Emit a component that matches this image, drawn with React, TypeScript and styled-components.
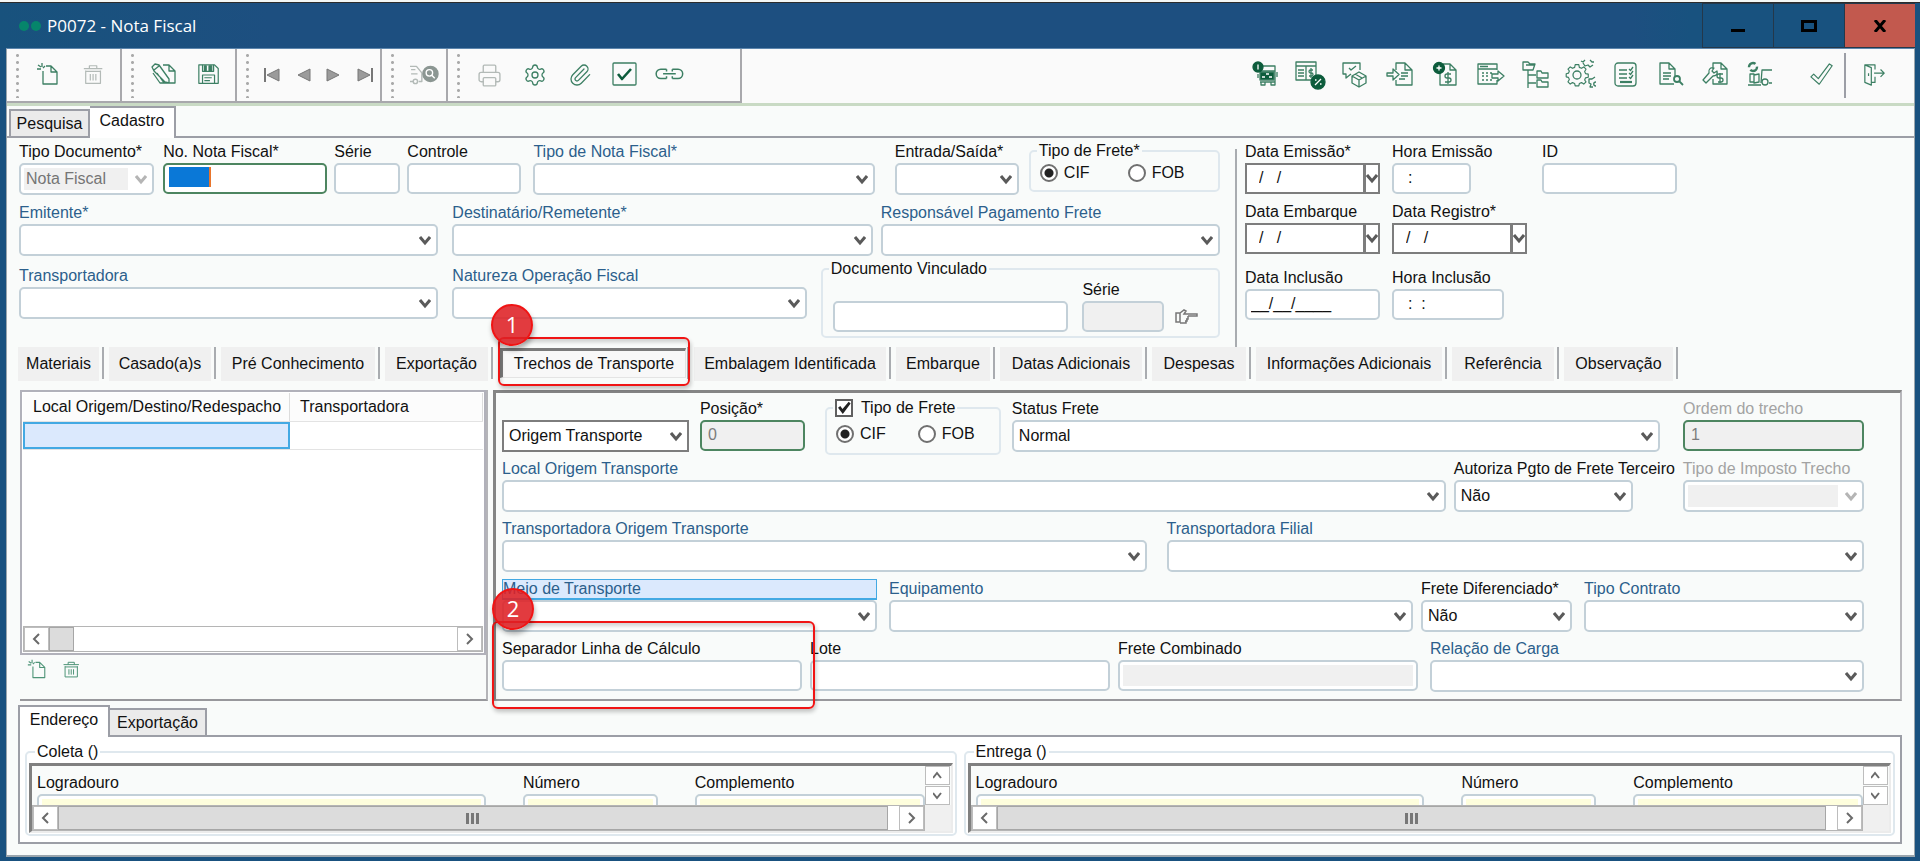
import React, { useId, useState } from 'react';
import styled, { createGlobalStyle, css } from 'styled-components';
import { Paperclip, Printer, Settings } from 'lucide-react';

const GlobalStyle = createGlobalStyle`
  * { box-sizing: border-box; }
  body { margin: 0; background: #19517f; }
  body, button, input, select {
    font-family: 'Liberation Sans', Arial, sans-serif;
    font-size: 16px;
    color: #111;
  }
  button { border: 0; padding: 0; background: none; }
  fieldset { margin: 0; padding: 0; border: 0; min-width: 0; }
`;

const c = {
  frame: '#19517f',
  face: '#f9fbfa',
  line: '#9c9ea6',
  field: '#c3d0d8',
  green: '#3c7f63',
  darkGreen: '#0d5c3c',
  link: '#2c5f8c',
};

/* ---------- window ---------- */

const Shell = styled.div`
  min-height: 100vh;
  display: flex;
  flex-direction: column;
  background: ${c.frame};
`;

const TopStrip = styled.div`
  height: 3px;
  background: #f4f7f5;
  border-bottom: 1px solid #2c2c2c;
`;

const TitleBar = styled.header`
  height: 45px;
  display: flex;
  align-items: center;
  padding: 0 5px 0 18px;
  background: linear-gradient(90deg, #18527d 0, #1d4f80 14%, #1d4f80 85%, #18527f 88%);
`;

const Dots = styled.svg`
  width: 24px;
  height: 12px;
  margin-right: 5px;
  fill: #06856b;
`;

const Title = styled.h1`
  margin: 0;
  flex: 1;
  font: 400 17px/24px 'Open Sans', 'Noto Sans', sans-serif;
  color: #fff;
`;

const WindowButton = styled.button<{ $close?: boolean }>`
  width: 71px;
  height: 45px;
  border: 1px solid #24384a;
  border-right-width: 0;
  background: ${p => (p.$close ? '#c2594e' : '#18527f')};
  display: grid;
  place-items: center;
`;

const Client = styled.main`
  flex: 1;
  margin: 0 5px 4px 6px;
  background: ${c.face};
  border: 1px solid #9aa5ad;
  border-top-color: #5d86ad;
  border-bottom-width: 2px;
`;

/* ---------- toolbar ---------- */

const Toolbar = styled.div`
  height: 57px;
  display: flex;
  border-bottom: 3px solid #c9dac4;
  background: #fafafa;
`;

const ToolGroup = styled.div<{ $tail?: number }>`
  display: flex;
  align-items: center;
  padding: 0 ${p => p.$tail ?? 0}px 0 9px;
  border-right: 2px solid #a8a8ac;
  border-bottom: 2px solid #a8a8ac;
`;

const Grip = styled.i`
  width: 3px;
  height: 46px;
  margin-right: 7px;
  background: radial-gradient(circle, #aaa 1px, transparent 2px) 0 0 / 3px 7px;
`;

const ToolButton = styled.button<{ $narrow?: boolean; $off?: boolean }>`
  width: ${p => (p.$narrow ? 31 : 45)}px;
  height: 45px;
  display: grid;
  place-items: center;
  color: ${p => (p.$off ? '#b3bab7' : c.green)};
`;

const Actions = styled.div`
  margin-left: auto;
  display: flex;
  align-items: center;
  padding: 0 17px 2px 0;
`;

const ActionEnd = styled.div<{ $line?: boolean }>`
  margin-left: ${p => (p.$line ? 16 : 6)}px;
  border-right: ${p => (p.$line ? `2px solid ${c.line}` : '0')};
`;

const Svg = styled.svg<{ $size?: number }>`
  width: ${p => p.$size ?? 26}px;
  height: ${p => p.$size ?? 26}px;
  fill: none;
  stroke: currentColor;
  stroke-width: 1.3;
  stroke-linejoin: round;
  overflow: visible;
`;

const G = c.darkGreen;

const icons: Record<string, React.ReactNode> = {
  new: (
    <path d="M7 9v13h14V10l-6-6h-5M15 4v6h6M1 7h4M6 1v4M2 3l3 2M9 4l-2 2" />
  ),
  trash: (
    <path d="M2 6h20M8 6V3h8v3M4 8v14h16V8M4 9h16M9 12v7M12 12v7M15 12v7" />
  ),
  edit: (
    <path d="M12 3h6l6 6v12H12M18 3v6h6M1 5l3-3 4 1 10 14v4l-4-1L3 9zM3 8l5-4M6 11l7 10H9L2 11" />
  ),
  save: (
    <>
      <path d="M2 2h17l4 4v16H2zM6 22v-9h13v9M8 16h8M8 19h6" />
      <path d="M6 2v7h12V2" />
      <path d="M13 3h3v5h-3zM8 3h2v5H8z" fill="currentColor" />
    </>
  ),
  truckSearch: (
    <>
      <path d="M0 5h6l5 6v8H8M1 8h4M1 12h6M0 19h3" />
      <circle cx="5" cy="19" r="2" />
      <circle cx="19" cy="12" r="7" fill="#8b9692" stroke="#8b9692" />
      <circle cx="18" cy="11" r="3" stroke="#fff" />
      <path d="M20 13l3 3" stroke="#fff" />
    </>
  ),
  checkBox: (
    <>
      <rect x="1" y="1" width="23" height="22" rx="1" />
      <path d="M6 12l4 5 9-10" stroke={G} strokeWidth="2.6" />
    </>
  ),
  link: (
    <path d="M10 8H5a4 4 0 000 8h5M15 8h5a4 4 0 010 8h-5M7 12h11M10 8v2M15 8v2M10 14v2M15 14v2" />
  ),
  truckInfo: (
    <>
      <path d="M7 4h15v16H7M7 9h15M8 20v3h4v-3M18 20v3h4v-3M5 12v4M24 10v5" />
      <rect x="7" y="10" width="14" height="8" fill={G} />
      <path d="M9 15h3M16 15h3M13 12h3" stroke="#fff" />
      <circle cx="5" cy="5" r="5" fill={G} stroke={G} />
      <path d="M5 2.5v5" stroke="#fff" />
    </>
  ),
  tablePercent: (
    <>
      <path d="M-2 0h20v18H-2zM-2 4h20M8 4v14M0 8h6M0 11h6M0 14h6" />
      <path d="M15 8h-2.500a1.500 1.500 0 000 3h1a1.500 1.500 0 010 3H11M13 6v10" />
      <circle cx="20" cy="20" r="7" fill={G} stroke={G} />
      <path d="M17 23l6-6M17 18h1.500M22 22h1.500" stroke="#fff" />
    </>
  ),
  box: (
    <path d="M8 12l-5 4v-4H0V1h17v7M6 6l2 2 5-4M9 14l7-4 7 4v7l-7 4-7-4zM9 14l7 4 7-4M16 18v7M12 12l7 4" />
  ),
  docIn: (
    <path d="M8 8V1h9l7 7v15H8v-5M17 1v7h7M-1 11h6V7l6 5.500L5 18v-4h-6zM13 11h7M13 14h7M11 17h6" />
  ),
  docAdd: (
    <>
      <path d="M10 2h7l6 6v15H7V10M17 2v6h6" />
      <path d="M18 12h-4a2 2 0 000 4h2a2 2 0 010 4h-4M15 10v12" />
      <circle cx="6" cy="6" r="5.500" fill={G} stroke={G} />
      <path d="M6 3.500v5M3.500 6h5" stroke="#fff" />
    </>
  ),
  calOut: (
    <path d="M19 8V2H0v20h19v-4M0 7h19M2 4.500h8M4 11h2M8 11h2M12 11h2M4 14h2M8 14h2M4 18h2M8 18h2M12 18h2M14 12h6V9l6 5-6 5v-3h-6z" />
  ),
  tree: (
    <path d="M0 0h5l2 2h5l-2 6H0zM3 3h9M5 8v18M5 13h8M5 21h8M14 9h4l1 2h6v5H14zM14 18h4l1 2h6v5H14z" />
  ),
  gears: (
    <>
      <path d="M8 3h4l.6 3 2.400 1 2.500-1.500L20 8l-1.500 2.500 1 2.400 3 .6v3.500l-3 .6-1 2.400L20 22l-2.500 2.500-2.500-1.600-2.400 1-.6 2.600H8l-.6-2.600-2.400-1-2.500 1.600L0 22l1.500-2.500-1-2.400L-2 16.500V13l2.500-.6 1-2.400L0 8l2.500-2.500L5 7l2.400-1z" transform="scale(.9)" />
      <circle cx="9" cy="13" r="4" />
      <path d="M13-1l2 1 2-2M22-2l2 2h2M15 1l2 3 3-1 2 2 3-2M27 15l-3 2-3 0v4l2 1-1 3 3 0M28 20c-3 0-3 4 0 4" />
    </>
  ),
  checklist: (
    <>
      <rect x="2" y="1" width="21" height="23" rx="3" />
      <path d="M6 8h8M6 12h8M6 16h8M16 7l1.500 1.500L20 5M16 11l1.500 1.500L20 9M16 15l1.500 1.500L20 13" />
      <path d="M7 20h12" strokeWidth="2.200" />
    </>
  ),
  docSearch: (
    <>
      <path d="M16 22H2V1h9l6 6v7M11 1v6h6M5 11h8M5 14h8M5 17h6" />
      <circle cx="19" cy="17" r="3" strokeWidth="1.800" />
      <path d="M21 19l4 4" strokeWidth="1.800" />
    </>
  ),
  docWrench: (
    <path d="M10 7V1h8l6 6v15H10v-5M18 1v6h6M20 12h-4a2 2 0 000 4h2a2 2 0 010 4h-3M17 11v10M0 18l6-7c-1-4 2-6 5-5L9 9l2 2 3-2c1 3-1 5-4 5l-7 7z" />
  ),
  forklift: (
    <>
      <circle cx="5" cy="5" r="4" strokeWidth="2.400" strokeDasharray="9 3" />
      <path d="M24 8H14l-1 13M2 12h4v8H2zM6 13l5-1v8l-5 1zM0 23h13M21 21h3" />
      <circle cx="17" cy="20" r="3" />
    </>
  ),
  confirm: <path d="M1 15l3-3 5 5L21 1l3 2L10 23z" />,
  exit: <path d="M2 2h11v5M2 2l7 3v19l-7-3zM9 21h4v-6M6 11v3M12 11h11M19 7l4 4-4 4" />,
};

const Icon = ({ name, size }: { name: string; size?: number }) => (
  <Svg viewBox="0 0 26 26" $size={size} aria-hidden>
    {icons[name]}
  </Svg>
);

const Arrow = ({ back, end }: { back?: boolean; end?: boolean }) => (
  <svg width="18" height="16" viewBox="0 0 18 16" aria-hidden>
    <g transform={back ? 'matrix(-1 0 0 1 18 0)' : undefined}>
      <path d="M2 2l12 6-12 6z" fill="#9b9b9b" stroke="#777" />
      {end && <path d="M16 1v14" stroke="#777" strokeWidth="2" />}
    </g>
  </svg>
);

/* ---------- page tabs ---------- */

const TabStrip = styled.div<{ $indent?: number }>`
  height: 32px;
  display: flex;
  align-items: flex-end;
  padding-left: ${p => p.$indent ?? 0}px;
  border-bottom: 2px solid ${c.line};
`;

const PageTab = styled.button<{ $on?: boolean; $w: number }>`
  width: ${p => p.$w}px;
  height: ${p => (p.$on ? 32 : 27)}px;
  border: 2px solid ${c.line};
  border-bottom: 0;
  background: ${p => (p.$on ? '#fff' : '#ebebeb')};
  ${p =>
    p.$on
      ? css`
          margin-bottom: -2px;
          padding-bottom: 5px;
        `
      : css`
          & + & { border-left: 0; }
        `}
`;

/* ---------- form parts ---------- */

const HeaderForm = styled.section`
  display: flex;
  min-height: 209px;
`;

const LeftForm = styled.div`
  flex: 1;
  min-width: 0;
  padding: 4px 15px 0 12px;
`;

const RightForm = styled.div`
  width: 35.5%;
  padding: 4px 0 0 8px;
`;

const Divider = styled.div`
  width: 2px;
  margin-top: 11px;
  background: #a9acb0;
`;

const Row = styled.div<{ $top?: number; $min?: number }>`
  display: flex;
  align-items: flex-start;
  margin-top: ${p => p.$top ?? 0}px;
  min-height: ${p => p.$min ?? 0}px;
`;

const Cell = styled.div<{ $w: number; $gap?: number; $fixed?: boolean; $drop?: number }>`
  position: relative;
  flex: ${p => (p.$fixed ? `0 1 ${p.$w}px` : `${p.$w} ${p.$w} ${p.$w}px`)};
  min-width: 0;
  margin-left: ${p => p.$gap ?? 0}px;
  padding-top: ${p => p.$drop ?? 0}px;
`;

type Tone = 'plain' | 'link' | 'off' | 'marked';

const Label = styled.label<{ $tone?: Tone }>`
  display: block;
  height: 21px;
  line-height: 20px;
  white-space: nowrap;
  color: ${p => (p.$tone === 'off' ? '#a3a3a3' : p.$tone === 'link' || p.$tone === 'marked' ? c.link : '#111')};
  ${p =>
    p.$tone === 'marked' &&
    css`
      line-height: 18px;
      background: #dbe9fd;
      border: 1px solid #43a9e3;
      box-shadow: inset 0 -1px #43a9e3;
    `}
`;

type Look = 'soft' | 'green' | 'square';

const boxLook = css<{ $look?: Look }>`
  width: 100%;
  margin: 0;
  display: block;
  background: #fff;
  border: 2px solid ${p => (p.$look === 'green' ? '#4d8560' : p.$look === 'square' ? '#7d7d7d' : c.field)};
  border-radius: ${p => (p.$look === 'square' ? 0 : 5)}px;
  outline: 0;
`;

const TextBox = styled.input<{ $look?: Look; $indent?: number; $tint?: string; $inner?: boolean }>`
  ${boxLook}
  height: 31px;
  padding: 0 2px 2px ${p => p.$indent ?? 6}px;
  background: ${p => p.$tint ?? '#fff'};
  ${p => p.$inner && 'box-shadow: inset 0 0 0 3px #fff;'}
  &:disabled { color: #7c7c7c; }
`;

const SelectWrap = styled.div`
  position: relative;
`;

const SelectBox = styled.select<{ $look?: Look }>`
  ${boxLook}
  height: 32px;
  appearance: none;
  padding: 0 24px 2px 5px;
  &:disabled {
    color: #757575;
    opacity: 1;
    background: #f0f0f0;
    box-shadow: inset -24px 0 #fff, inset 0 0 0 3px #fff;
  }
`;

const Chevron = styled.svg<{ $off?: boolean }>`
  position: absolute;
  right: 7px;
  top: 11px;
  width: 12px;
  height: 11px;
  fill: none;
  stroke: ${p => (p.$off ? '#b5b5b5' : '#5a5a5a')};
  stroke-width: 3;
  pointer-events: none;
`;

const ChevronPath = () => <path d="M1 2l5 6 5-6" />;

interface FieldProps {
  label?: string;
  name?: string;
  w: number;
  gap?: number;
  drop?: number;
  fixed?: boolean;
  tone?: Tone;
  look?: Look;
  value?: string;
  disabled?: boolean;
  indent?: number;
  tint?: string;
  inner?: boolean;
  children?: React.ReactNode;
}

const TextField = (p: FieldProps) => {
  const id = useId();
  return (
    <Cell $w={p.w} $gap={p.gap} $fixed={p.fixed} $drop={p.drop}>
      <Label htmlFor={id} $tone={p.tone}>{p.label}</Label>
      <TextBox
        id={id}
        aria-label={p.name}
        defaultValue={p.value}
        disabled={p.disabled}
        $look={p.look}
        $indent={p.indent}
        $tint={p.tint}
        $inner={p.inner}
      />
      {p.children}
    </Cell>
  );
};

const SelectField = (p: FieldProps) => {
  const id = useId();
  return (
    <Cell $w={p.w} $gap={p.gap} $fixed={p.fixed} $drop={p.drop}>
      <Label htmlFor={id} $tone={p.tone}>{p.label}</Label>
      <SelectWrap>
        <SelectBox id={id} aria-label={p.name} $look={p.look} disabled={p.disabled}>
          <option>{p.value ?? ''}</option>
        </SelectBox>
        <Chevron viewBox="0 0 12 11" $off={p.disabled}><ChevronPath /></Chevron>
      </SelectWrap>
    </Cell>
  );
};

const DateBox = styled.div`
  display: flex;
  height: 31px;
  border: 2px solid #7d7d7d;
  background: #fff;
`;

const DateInput = styled.input`
  flex: 1;
  min-width: 0;
  border: 0;
  outline: 0;
  padding: 0 0 2px 12px;
  white-space: pre;
`;

const DateButton = styled.button`
  width: 15px;
  border-left: 3px solid #7d7d7d;
  display: grid;
  place-items: center;
  svg { fill: none; stroke: #5a5a5a; stroke-width: 3; }
`;

const DateField = ({ label, gap }: { label: string; gap?: number }) => {
  const id = useId();
  return (
    <Cell $w={135} $gap={gap} $fixed>
      <Label htmlFor={id}>{label}</Label>
      <DateBox>
        <DateInput id={id} defaultValue="/   /" />
        <DateButton type="button" aria-label={`Abrir calendário: ${label}`}>
          <svg width="12" height="11" viewBox="0 0 12 11"><ChevronPath /></svg>
        </DateButton>
      </DateBox>
    </Cell>
  );
};

const Group = styled.fieldset<{ $w: number; $gap: number; $h: number }>`
  flex: ${p => `${p.$w} ${p.$w} ${p.$w}px`};
  margin-left: ${p => p.$gap}px;
  height: ${p => p.$h}px;
  border: 2px solid #dfe8ee;
  border-radius: 5px;
`;

const Legend = styled.legend`
  margin-left: 6px;
  padding: 0 2px;
  line-height: 18px;
`;

const Radios = styled.div<{ $gap: number; $drop: number }>`
  display: flex;
  gap: ${p => p.$gap}px;
  padding: ${p => p.$drop}px 0 0 9px;
`;

const RadioLabel = styled.label`
  display: flex;
  align-items: center;
  gap: 6px;
  line-height: 22px;
`;

const Radio = styled.input`
  appearance: none;
  width: 18px;
  height: 18px;
  margin: 0;
  border: 2px solid #707070;
  border-radius: 50%;
  background: #fff;
  &:checked {
    background: radial-gradient(circle, #222 4px, #fff 5px);
  }
`;

const RadioPair = ({ name, gap, drop }: { name: string; gap: number; drop: number }) => (
  <Radios $gap={gap} $drop={drop}>
    <RadioLabel><Radio type="radio" name={name} defaultChecked />CIF</RadioLabel>
    <RadioLabel><Radio type="radio" name={name} />FOB</RadioLabel>
  </Radios>
);

const Check = styled.input`
  appearance: none;
  width: 18px;
  height: 18px;
  margin: 0;
  border: 2px solid #606060;
  background: #fff;
  &:checked::before {
    content: '';
    display: block;
    width: 14px;
    height: 14px;
    background: #222;
    clip-path: polygon(8% 48%, 24% 36%, 40% 58%, 84% 6%, 98% 18%, 42% 92%);
  }
`;

const CheckLabel = styled.label`
  display: flex;
  align-items: center;
  gap: 8px;
`;

const Selection = styled.span`
  position: absolute;
  left: 6px;
  top: 25px;
  width: 42px;
  height: 20px;
  background: #0a78d7;
  border-right: 2px solid #e8752c;
`;

const LinkedDoc = styled.div`
  display: flex;
  align-items: flex-end;
  padding: 2px 18px 0 10px;
`;

const HandButton = styled.button`
  width: 26px;
  height: 26px;
  margin-left: 10px;
`;

/* ---------- detail tabs ---------- */

const DetailTabs = styled.nav`
  display: flex;
  height: 43px;
  padding: 0 0 8px 6px;
`;

const DetailSlot = styled.div<{ $w: number }>`
  position: relative;
  flex: 0 1 ${p => p.$w}px;
  height: 32px;
  padding: 0 3px 0 5px;
  border-right: 2px solid #a9acb0;
`;

const DetailTab = styled.button<{ $on?: boolean }>`
  width: 100%;
  white-space: nowrap;
  ${p =>
    p.$on
      ? css`
          height: 30px;
          margin-top: 1px;
          margin-left: 2px;
          border: 1px solid #e4e4e4;
          border-top: 3px solid #7a7a7a;
          border-left: 3px solid #7a7a7a;
          background: #f8f8f8;
        `
      : css`
          height: 34px;
          background: #f0f0f0;
        `}
`;

const Callout = styled.div<{ $tab?: boolean }>`
  position: absolute;
  z-index: 2;
  pointer-events: none;
  border: 2px solid #f01414;
  border-radius: 6px;
  box-shadow: 1px 3px 4px rgba(0, 0, 0, 0.22), inset 1px 3px 4px rgba(0, 0, 0, 0.18);
  ${p =>
    p.$tab
      ? css`inset: -10px -3px -7px 5px;`
      : css`inset: -18px -13px -18px -10px;`}
`;

const Bubble = styled.span<{ $left: number }>`
  position: absolute;
  left: ${p => p.$left}px;
  top: -35px;
  width: 42px;
  height: 42px;
  border: 2px solid #f01414;
  border-radius: 50%;
  background: rgba(222, 32, 36, 0.88);
  box-shadow: 1px 4px 5px rgba(0, 0, 0, 0.3);
  color: #fff;
  text-align: center;
  font: 400 22px/36px 'Open Sans', 'Noto Sans', sans-serif;
`;

/* ---------- detail area ---------- */

const Detail = styled.section`
  display: flex;
  gap: 5px;
  padding: 0 12px 0 13px;
`;

const ListPane = styled.div`
  flex: 468 468 468px;
  min-width: 0;
  border-right: 2px solid #b4b4b8;
  border-bottom: 2px solid #98989c;
`;

const ListFrame = styled.div`
  height: 265px;
  padding: 1px;
  border: 2px solid #b1b1ba;
  background: #fff;
  display: flex;
  flex-direction: column;
`;

const ListTable = styled.table`
  width: 100%;
  table-layout: fixed;
  border-collapse: collapse;
  margin-bottom: auto;
  th, td {
    height: 28px;
    padding: 0 0 0 10px;
    text-align: left;
    font-weight: 400;
    white-space: nowrap;
    overflow: hidden;
    border-bottom: 1px solid #e3e3e3;
  }
  th { background: #fcfcfc; border-right: 1px solid #dcdcdc; }
  th:first-child { width: 58%; }
  td:first-child { background: #dbe9fd; box-shadow: inset 0 0 0 2px #43a9e3; }
`;

const ListTools = styled.div`
  display: flex;
  padding: 3px 0 0 4px;
`;

const SmallButton = styled.button`
  width: 28px;
  height: 28px;
  margin-right: 6px;
  color: #4f9578;
`;

const HBar = styled.div`
  display: flex;
  height: 26px;
  border: 1px solid #b5b5b5;
  background: #fff;
`;

const BarButton = styled.button<{ $up?: boolean }>`
  flex: none;
  width: 25px;
  height: ${p => (p.$up ? '19px' : 'auto')};
  display: grid;
  place-items: center;
  background: #fff;
  border: 1px solid #bdbdbd;
  svg { fill: none; stroke: #6a6a6a; stroke-width: 2; }
`;

const Track = styled.div`
  flex: 1;
  display: flex;
`;

const Thumb = styled.div<{ $wide?: boolean }>`
  width: ${p => (p.$wide ? 'calc(100% - 11px)' : '25px')};
  background: #dcdcdc;
  border: 1px solid #a6a6a6;
  display: grid;
  place-items: center;
`;

const ThumbGrip = styled.i`
  width: 13px;
  height: 11px;
  background: repeating-linear-gradient(90deg, #777 0 3px, transparent 3px 5px);
`;

const arrows = {
  left: 'M7 1L2 6l5 5',
  right: 'M2 1l5 5-5 5',
  up: 'M0 8l4-5 4 5',
  down: 'M0 3l4 5 4-5',
};

const ArrowGlyph = ({ dir }: { dir: keyof typeof arrows }) => (
  <svg width="9" height="12" viewBox="0 0 9 12" aria-hidden><path d={arrows[dir]} /></svg>
);

const Scroll = ({ wide }: { wide?: boolean }) => (
  <HBar>
    <BarButton aria-label="Rolar para a esquerda"><ArrowGlyph dir="left" /></BarButton>
    <Track><Thumb $wide={wide}>{wide && <ThumbGrip />}</Thumb></Track>
    <BarButton aria-label="Rolar para a direita"><ArrowGlyph dir="right" /></BarButton>
  </HBar>
);

const EditPane = styled.div`
  flex: 1409 1409 1409px;
  min-width: 0;
  padding: 6px 36px 0 6px;
  border: 3px solid #858585;
  border-right: 2px solid #b8b8bc;
  border-bottom: 2px solid #98989c;
`;

/* ---------- address pane ---------- */

const Addresses = styled.section`
  padding: 4px 12px 11px 11px;
`;

const AddressPage = styled.div`
  display: flex;
  gap: 7px;
  padding: 6px 5px 6px;
  background: #fff;
  border: 2px solid ${c.line};
  border-top: 0;
`;

const AddressGroup = styled.fieldset`
  flex: 1;
  padding: 2px 2px 1px;
  border: 2px solid #dfe8ee;
  border-radius: 5px;
`;

const AddressBox = styled.div`
  border: 2px solid #ececec;
  border-top: 3px solid #808080;
  border-left: 3px solid #808080;
  display: grid;
  grid-template-columns: minmax(0, 1fr) 26px;
  background: ${c.face};
`;

const AddressView = styled.div`
  height: 39px;
  overflow: hidden;
  padding: 7px 0 0 5px;
`;

const UpDown = styled.div`
  display: flex;
  flex-direction: column;
  gap: 1px;
`;

const Corner = styled.div`
  background: #f0f0f0;
`;

const Address = ({ title }: { title: string }) => (
  <AddressGroup>
    <Legend>{title}</Legend>
    <AddressBox>
      <AddressView>
        <Row>
          <TextField label="Logradouro" w={450} tint="#fefedd" inner />
          <TextField label="Número" w={135} gap={37} tint="#fefedd" inner />
          <TextField label="Complemento" w={230} gap={37} tint="#fefedd" inner />
        </Row>
      </AddressView>
      <UpDown>
        <BarButton $up aria-label="Rolar para cima"><ArrowGlyph dir="up" /></BarButton>
        <BarButton $up aria-label="Rolar para baixo"><ArrowGlyph dir="down" /></BarButton>
      </UpDown>
      <Scroll wide />
      <Corner />
    </AddressBox>
  </AddressGroup>
);

/* ---------- data ---------- */

const segment = 'Trechos de Transporte';

const detailTabs: [string, number][] = [
  ['Materiais', 91],
  ['Casado(a)s', 112],
  ['Pré Conhecimento', 164],
  ['Exportação', 113],
  [segment, 196],
  ['Embalagem Identificada', 202],
  ['Embarque', 104],
  ['Datas Adicionais', 152],
  ['Despesas', 104],
  ['Informações Adicionais', 196],
  ['Referência', 112],
  ['Observação', 119],
];

const actions: [string, string][] = [
  ['truckInfo', 'Informações do transporte'],
  ['tablePercent', 'Impostos'],
  ['box', 'Embalagens'],
  ['docIn', 'Importar documento'],
  ['docAdd', 'Adicionar valor'],
  ['calOut', 'Agendamento'],
  ['tree', 'Estrutura'],
  ['gears', 'Processar'],
  ['checklist', 'Ocorrências'],
  ['docSearch', 'Consultar documento'],
  ['docWrench', 'Ajustar valores'],
  ['forklift', 'Movimentação'],
];

export default function App() {
  const [active, setActive] = useState(segment);

  return (
    <Shell>
      <GlobalStyle />
      <TopStrip />
      <TitleBar>
        <Dots viewBox="0 0 24 12"><circle cx="6" cy="6" r="5" /><circle cx="18" cy="6" r="5" /></Dots>
        <Title>P0072 - Nota Fiscal</Title>
        <WindowButton aria-label="Minimizar">
          <svg width="16" height="16"><path d="M1 11h14v3H1z" /></svg>
        </WindowButton>
        <WindowButton aria-label="Maximizar">
          <svg width="16" height="12"><path d="M1.500 1.500h13v9h-13z" fill="none" stroke="#000" strokeWidth="3" /></svg>
        </WindowButton>
        <WindowButton $close aria-label="Fechar">
          <svg width="14" height="12"><path d="M2 0l10 12M12 0L2 12" stroke="#000" strokeWidth="3" /></svg>
        </WindowButton>
      </TitleBar>

      <Client>
        <Toolbar>
          <ToolGroup $tail={4}>
            <Grip />
            <ToolButton aria-label="Novo"><Icon name="new" /></ToolButton>
            <ToolButton $off aria-label="Excluir"><Icon name="trash" size={24} /></ToolButton>
          </ToolGroup>
          <ToolGroup $tail={4}>
            <Grip />
            <ToolButton aria-label="Editar"><Icon name="edit" /></ToolButton>
            <ToolButton aria-label="Salvar"><Icon name="save" size={24} /></ToolButton>
          </ToolGroup>
          <ToolGroup>
            <Grip />
            <ToolButton $narrow aria-label="Primeiro"><Arrow back end /></ToolButton>
            <ToolButton $narrow aria-label="Anterior"><Arrow back /></ToolButton>
            <ToolButton $narrow aria-label="Próximo"><Arrow /></ToolButton>
            <ToolButton $narrow aria-label="Último"><Arrow end /></ToolButton>
          </ToolGroup>
          <ToolGroup>
            <Grip />
            <ToolButton $off aria-label="Consultar transporte"><Icon name="truckSearch" size={28} /></ToolButton>
          </ToolGroup>
          <ToolGroup $tail={48}>
            <Grip />
            <ToolButton $off aria-label="Imprimir"><Printer size={25} strokeWidth={1.3} /></ToolButton>
            <ToolButton aria-label="Configurar"><Settings size={24} strokeWidth={1.3} /></ToolButton>
            <ToolButton aria-label="Anexos"><Paperclip size={24} strokeWidth={1.3} /></ToolButton>
            <ToolButton aria-label="Aprovar"><Icon name="checkBox" /></ToolButton>
            <ToolButton aria-label="Vincular"><Icon name="link" size={30} /></ToolButton>
          </ToolGroup>
          <Actions>
            {actions.map(([icon, label]) => (
              <ToolButton key={icon} aria-label={label}><Icon name={icon} /></ToolButton>
            ))}
            <ActionEnd $line>
              <ToolButton aria-label="Confirmar"><Icon name="confirm" size={24} /></ToolButton>
            </ActionEnd>
            <ActionEnd>
              <ToolButton aria-label="Sair"><Icon name="exit" size={24} /></ToolButton>
            </ActionEnd>
          </Actions>
        </Toolbar>

        <TabStrip $indent={2}>
          <PageTab $w={81}>Pesquisa</PageTab>
          <PageTab $w={86} $on>Cadastro</PageTab>
        </TabStrip>

        <HeaderForm>
          <LeftForm>
            <Row>
              <SelectField label="Tipo Documento*" value="Nota Fiscal" w={135} disabled />
              <TextField label="No. Nota Fiscal*" w={164} gap={9} look="green"><Selection /></TextField>
              <TextField label="Série" w={66} gap={7} />
              <TextField label="Controle" w={114} gap={7} />
              <SelectField label="Tipo de Nota Fiscal*" tone="link" w={341} gap={12} />
              <SelectField label="Entrada/Saída*" w={124} gap={20} />
              <Group $w={191} $gap={10} $h={50}>
                <Legend>Tipo de Frete*</Legend>
                <RadioPair name="frete" gap={38} drop={2} />
              </Group>
            </Row>
            <Row $top={8}>
              <SelectField label="Emitente*" tone="link" w={419} />
              <SelectField label="Destinatário/Remetente*" tone="link" w={420} gap={14} />
              <SelectField label="Responsável Pagamento Frete" tone="link" w={339} gap={8} />
            </Row>
            <Row $top={4}>
              <SelectField label="Transportadora" tone="link" w={419} drop={6} />
              <SelectField label="Natureza Operação Fiscal" tone="link" w={354} gap={14} drop={6} />
              <Group $w={399} $gap={14} $h={78}>
                <Legend>Documento Vinculado</Legend>
                <LinkedDoc>
                  <TextField name="Documento vinculado" w={234} />
                  <TextField label="Série" w={81} gap={14} disabled tint="#f0f0f0" />
                  <HandButton aria-label="Localizar documento">
                    <svg width="24" height="16" viewBox="0 0 24 16" fill="none" stroke="#777" strokeWidth="1.5">
                      <path d="M1 4h4v9H1zM5 4l4-3 2 1-2 3h13v2H13M13 7v3h-2M12 10v2h-2M11 12v2H5" />
                    </svg>
                  </HandButton>
                </LinkedDoc>
              </Group>
            </Row>
          </LeftForm>
          <Divider />
          <RightForm>
            <Row>
              <DateField label="Data Emissão*" />
              <TextField label="Hora Emissão" value=":" w={79} gap={12} indent={14} fixed />
              <TextField label="ID" w={135} gap={71} fixed />
            </Row>
            <Row $top={8}>
              <DateField label="Data Embarque" />
              <DateField label="Data Registro*" gap={12} />
            </Row>
            <Row $top={14}>
              <TextField label="Data Inclusão" value="__/__/____" w={135} indent={4} fixed />
              <TextField label="Hora Inclusão" value=":  :" w={112} gap={12} indent={14} fixed />
            </Row>
          </RightForm>
        </HeaderForm>

        <DetailTabs>
          {detailTabs.map(([name, w]) => (
            <DetailSlot key={name} $w={w}>
              <DetailTab $on={name === active} onClick={() => setActive(name)}>{name}</DetailTab>
              {name === segment && <Callout $tab><Bubble $left={-9}>1</Bubble></Callout>}
            </DetailSlot>
          ))}
        </DetailTabs>

        <Detail>
          <ListPane>
            <ListFrame>
              <ListTable>
                <thead>
                  <tr><th>Local Origem/Destino/Redespacho</th><th>Transportadora</th></tr>
                </thead>
                <tbody>
                  <tr><td /><td /></tr>
                </tbody>
              </ListTable>
              <Scroll />
            </ListFrame>
            <ListTools>
              <SmallButton aria-label="Novo trecho"><Icon name="new" size={22} /></SmallButton>
              <SmallButton aria-label="Excluir trecho"><Icon name="trash" size={20} /></SmallButton>
            </ListTools>
          </ListPane>

          <EditPane>
            <Row $min={60}>
              <SelectField name="Tipo de trecho" value="Origem Transporte" look="square" w={187} />
              <TextField label="Posição*" value="0" look="green" tint="#f0f0f0" disabled w={105} gap={11} />
              <Group $w={176} $gap={20} $h={56}>
                <Legend>
                  <CheckLabel><Check type="checkbox" defaultChecked />Tipo de Frete</CheckLabel>
                </Legend>
                <RadioPair name="freteTrecho" gap={32} drop={6} />
              </Group>
              <SelectField label="Status Frete" value="Normal" w={649} gap={11} />
              <TextField label="Ordem do trecho" value="1" look="green" tone="off" tint="#f0f0f0" disabled w={181} gap={23} />
            </Row>
            <Row $min={60}>
              <SelectField label="Local Origem Transporte" tone="link" w={943} />
              <SelectField label="Autoriza Pgto de Frete Terceiro" value="Não" w={179} gap={8} />
              <SelectField label="Tipo de Imposto Trecho" tone="off" disabled w={181} gap={50} />
            </Row>
            <Row $min={60}>
              <SelectField label="Transportadora Origem Transporte" tone="link" w={645} />
              <SelectField label="Transportadora Filial" tone="link" w={698} gap={20} />
            </Row>
            <Row $min={60}>
              <SelectField label="Meio de Transporte" tone="marked" w={375} />
              <SelectField label="Equipamento" tone="link" w={524} gap={12} />
              <SelectField label="Frete Diferenciado*" value="Não" w={151} gap={8} />
              <SelectField label="Tipo Contrato" tone="link" w={280} gap={12} />
            </Row>
            <Row $min={60}>
              <TextField label="Separador Linha de Cálculo" w={300}>
                <Callout><Bubble $left={-2}>2</Bubble></Callout>
              </TextField>
              <TextField label="Lote" w={300} gap={8} />
              <TextField label="Frete Combinado" disabled tint="#f0f0f0" inner w={300} gap={8} />
              <SelectField label="Relação de Carga" tone="link" w={434} gap={12} />
            </Row>
          </EditPane>
        </Detail>

        <Addresses>
          <TabStrip>
            <PageTab $w={92} $on>Endereço</PageTab>
            <PageTab $w={97}>Exportação</PageTab>
          </TabStrip>
          <AddressPage>
            <Address title="Coleta ()" />
            <Address title="Entrega ()" />
          </AddressPage>
        </Addresses>
      </Client>
    </Shell>
  );
}
